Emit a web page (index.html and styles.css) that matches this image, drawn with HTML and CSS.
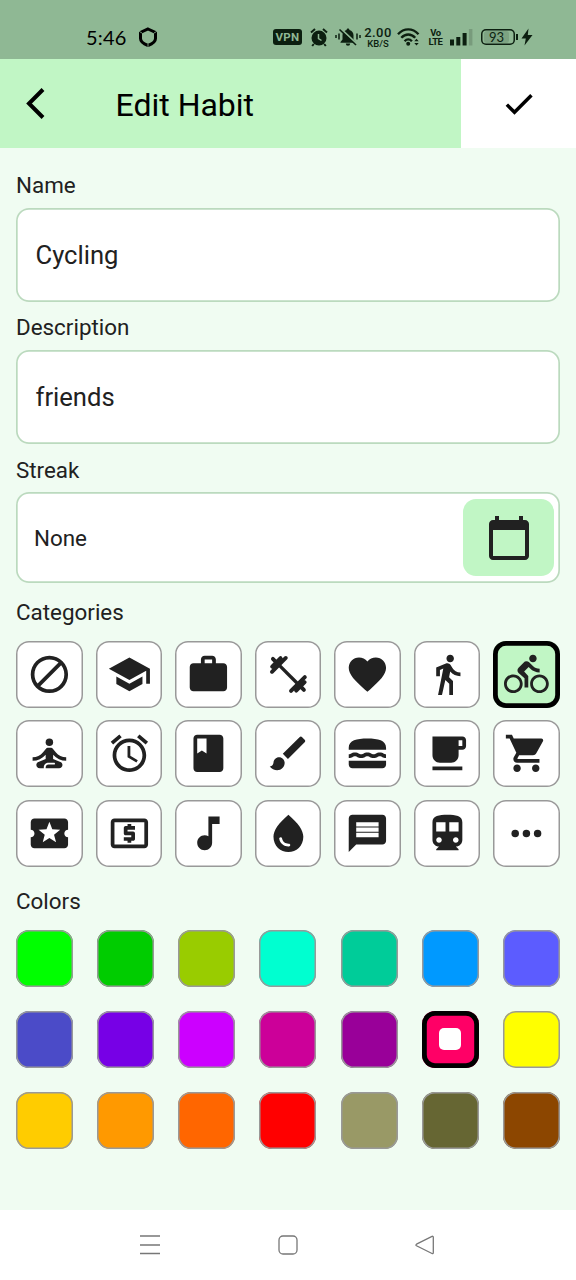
FILE: index.html
```html
<!DOCTYPE html>
<html lang="en">
<head>
<meta charset="utf-8">
<title>Edit Habit</title>
<link rel="stylesheet" href="styles.css">
</head>
<body>
<div class="screen">
  <div class="status">
    <span class="clock">5:46</span>
    <svg class="hex" width="22" height="22" viewBox="0 0 22 22"><path d="M11 3L18.500 6.500V12.500C18.500 15.500 15 18 11 19.500C7 18 3.500 15.500 3.500 12.500V6.500Z" fill="none" stroke="#000" stroke-width="3"/><path d="M11 17.500V22M1.500 5L5 7M20.500 5L17 7" stroke="#8fb894" stroke-width=".8"/></svg>
    <span class="vpn">VPN</span>
    <svg class="s-alarm" width="20" height="20" viewBox="0 0 20 20"><circle cx="10" cy="11" r="7.500" fill="#0c1f10"/><path d="M2 5.500L6 2M18 5.500L14 2M4.800 17L3.200 19M15.200 17L16.800 19" stroke="#0c1f10" stroke-width="2"/><path d="M9.500 7V11.500L12.500 13.500" fill="none" stroke="#8fb894" stroke-width="1.500"/></svg>
    <svg class="s-bell" width="26" height="20" viewBox="0 0 26 20"><path d="M13 1.500c.9 0 1.400.6 1.400 1.400 2.600.6 4.100 2.800 4.100 5.400v4.200l2 2.500v.8h-15v-.8l2-2.500V8.300c0-2.600 1.500-4.800 4.100-5.400 0-.8.5-1.400 1.400-1.400zM10.800 16.500h4.400a2.200 2.200 0 0 1-4.400 0z" fill="#0c1f10"/><path d="M6 2L22 17" stroke="#8fb894" stroke-width="1.800"/><path d="M4.500 2.500L21 18" stroke="#0c1f10" stroke-width="1.600"/><path d="M1 8v3M4 6.500v6M22 6.500v6M25 8v3" stroke="#0c1f10" stroke-width="1.500"/></svg>
    <span class="speed"><b>2.00</b><i>KB/S</i></span>
    <svg class="wifi" width="24" height="20" viewBox="0 0 24 20"><g fill="none" stroke="#0c1f10" stroke-width="2.400"><path d="M1 7.200C7 .7 15.500.7 21.500 7.200"/><path d="M4.300 10.800C8.500 6.300 14 6.300 18.200 10.800"/><path d="M7.600 14.200C9.800 11.800 12.700 11.800 14.900 14.200"/></g><circle cx="11.200" cy="16.800" r="2" fill="#0c1f10"/><path d="M17.300 14.300L19.500 11.700L21.700 14.300ZM17.300 16L19.500 18.600L21.700 16Z" fill="#0c1f10"/></svg>
    <span class="volte"><b>Vo</b><b>LTE</b></span>
    <svg class="signal" width="23" height="17" viewBox="0 0 23 17"><path d="M0 10.500h4V16.500H0zM6.300 8h4V16.500h-4zM12.600 4h4V16.500h-4z" fill="#0c1f10"/><path d="M18.900 0h3.500v16.500h-3.500z" fill="#789b7c"/></svg>
    <span class="battery"><span class="charge">93</span></span>
    <svg class="bolt" width="12" height="18" viewBox="0 0 12 18"><path d="M7.500 0.500L.5 10.500H4.800L3.500 17.500L11.500 7H6.800Z" fill="#0c1f10"/></svg>
  </div>

  <div class="header">
    <svg class="back" width="24" height="36" viewBox="0 0 24 36"><path d="M19 3.500L5 17.500L19 31.500" fill="none" stroke="#000" stroke-width="4"/></svg>
    <h1 class="title">Edit Habit</h1>
    <div class="save"><svg width="36" height="36" viewBox="0 0 24 24"><path d="M3.900 12.400L9 17.500L20.300 6.200" fill="none" stroke="#000" stroke-width="2.300"/></svg></div>
  </div>

  <div class="form">
    <div class="label">Name</div>
    <div class="input">Cycling</div>
    <div class="label">Description</div>
    <div class="input">friends</div>
    <div class="label">Streak</div>
    <div class="input streak">None
      <span class="date"><svg width="48" height="48" viewBox="0 0 24 24"><path d="M20 3h-1V1h-2v2H7V1H5v2H4c-1.100 0-2 .9-2 2v16c0 1.100.9 2 2 2h16c1.100 0 2-.9 2-2V5c0-1.100-.9-2-2-2zm0 18H4V8h16v13z"/></svg></span>
    </div>
    <div class="label cat-label">Categories</div>
    <div class="cats">
      <div class="cat"><svg viewBox="0 0 24 24"><path d="M12 2C6.480 2 2 6.480 2 12s4.480 10 10 10 10-4.480 10-10S17.520 2 12 2zM4 12c0-4.420 3.580-8 8-8 1.850 0 3.550.63 4.900 1.690L5.690 16.900C4.630 15.550 4 13.850 4 12zm8 8c-1.850 0-3.550-.63-4.900-1.690L18.310 7.100C19.370 8.450 20 10.150 20 12c0 4.420-3.580 8-8 8z"/></svg></div>
      <div class="cat"><svg viewBox="0 0 24 24"><path d="M5 13.180v4L12 21l7-3.820v-4L12 17l-7-3.820zM12 3L1 9l11 6 9-4.910V17h2V9L12 3z"/></svg></div>
      <div class="cat"><svg viewBox="0 0 24 24"><path d="M20 6h-4V4c0-1.110-.89-2-2-2h-4c-1.110 0-2 .89-2 2v2H4c-1.110 0-1.990.89-1.990 2L2 19c0 1.110.89 2 2 2h16c1.110 0 2-.89 2-2V8c0-1.110-.89-2-2-2zm-6 0h-4V4h4v2z"/></svg></div>
      <div class="cat"><svg viewBox="0 0 24 24"><path d="M5 5L19 19" fill="none" stroke="#212121" stroke-width="1.800"/><path d="M3.200 10.600L10.600 3.200M3.300 7.800L7.800 3.300M3.700 3.700L5 5M13.400 20.800L20.800 13.400M16.200 20.700L20.700 16.200M19 19L20.300 20.300" fill="none" stroke="#212121" stroke-width="2.100" stroke-linecap="round"/></svg></div>
      <div class="cat"><svg viewBox="0 0 24 24"><path d="M12 21.350l-1.450-1.320C5.400 15.360 2 12.280 2 8.500 2 5.420 4.420 3 7.500 3c1.740 0 3.410.81 4.500 2.090C13.090 3.810 14.760 3 16.500 3 19.580 3 22 5.420 22 8.500c0 3.780-3.400 6.860-8.550 11.540L12 21.350z"/></svg></div>
      <div class="cat"><svg viewBox="0 0 24 24"><path d="M13.500 5.500c1.100 0 2-.9 2-2s-.9-2-2-2-2 .9-2 2 .9 2 2 2zM9.800 8.900L7 23h2.100l1.800-8 2.100 2v6h2v-7.500l-2.100-2 .6-3C14.800 12 16.800 13 19 13v-2c-1.900 0-3.500-1-4.300-2.400l-1-1.600c-.4-.6-1-1-1.700-1-.3 0-.5.1-.8.1L6 8.300V13h2V9.600l1.800-.7"/></svg></div>
      <div class="cat on"><svg viewBox="0 0 24 24"><path d="M15.500 5.500c1.100 0 2-.9 2-2s-.9-2-2-2-2 .9-2 2 .9 2 2 2zM5 12c-2.800 0-5 2.200-5 5s2.200 5 5 5 5-2.200 5-5-2.200-5-5-5zm0 8.500c-1.900 0-3.500-1.600-3.500-3.500s1.600-3.500 3.500-3.500 3.500 1.600 3.500 3.500-1.600 3.500-3.500 3.500zm5.800-10l2.400-2.400.8.8c1.300 1.300 3 2.100 5.100 2.100V9c-1.500 0-2.700-.6-3.600-1.500l-1.900-1.900c-.5-.4-1-.6-1.600-.6s-1.100.2-1.400.6L7.800 8.400c-.4.4-.6.9-.6 1.400 0 .6.2 1.100.6 1.400L11 14v5h2v-6.200l-2.200-2.300zM19 12c-2.800 0-5 2.200-5 5s2.200 5 5 5 5-2.200 5-5-2.200-5-5-5zm0 8.500c-1.900 0-3.500-1.600-3.500-3.500s1.600-3.500 3.500-3.500 3.500 1.600 3.500 3.500-1.600 3.500-3.500 3.500z"/></svg></div>
      <div class="cat"><svg viewBox="0 0 24 24"><circle cx="12" cy="6" r="2"/><path d="M21 16v-2c-2.240 0-4.160-.96-5.600-2.680l-1.340-1.600C13.680 9.260 13.120 9 12.530 9h-1.050c-.59 0-1.150.26-1.530.72l-1.340 1.600C7.160 13.040 5.240 14 3 14v2c2.770 0 5.190-1.170 7-3.250V15l-3.880 1.550C5.450 16.820 5 17.480 5 18.210 5 19.200 5.800 20 6.790 20H9v-.5c0-1.380 1.120-2.500 2.500-2.500h3c.28 0 .5.22.5.5s-.22.5-.5.5h-3c-.83 0-1.500.67-1.500 1.500v.5h7.210c.99 0 1.790-.8 1.790-1.790 0-.73-.45-1.390-1.120-1.660L14 15v-2.250c1.810 2.080 4.230 3.250 7 3.250z"/></svg></div>
      <div class="cat"><svg viewBox="0 0 24 24"><path d="M22 5.720l-4.600-3.860-1.290 1.530 4.600 3.860L22 5.720zM7.880 3.390L6.600 1.860 2 5.710l1.290 1.530 4.590-3.850zM12.500 8H11v6l4.750 2.850.75-1.230-4-2.370V8zM12 4c-4.970 0-9 4.030-9 9s4.020 9 9 9c4.970 0 9-4.030 9-9s-4.030-9-9-9zm0 16c-3.870 0-7-3.130-7-7s3.130-7 7-7 7 3.130 7 7-3.130 7-7 7z"/></svg></div>
      <div class="cat"><svg viewBox="0 0 24 24"><path d="M18 2H6c-1.100 0-2 .9-2 2v16c0 1.100.9 2 2 2h12c1.100 0 2-.9 2-2V4c0-1.100-.9-2-2-2zM6 4h5v8l-2.500-1.500L6 12V4z"/></svg></div>
      <div class="cat"><svg viewBox="0 0 24 24"><path d="M7 14c-1.660 0-3 1.340-3 3 0 1.310-1.160 2-2 2 .92 1.220 2.490 2 4 2 2.210 0 4-1.790 4-4 0-1.660-1.340-3-3-3zm13.710-9.370l-1.340-1.340c-.39-.39-1.020-.39-1.410 0L9 12.250 11.750 15l8.960-8.960c.39-.39.39-1.020 0-1.410z"/></svg></div>
      <div class="cat"><svg viewBox="0 0 24 24"><path d="M2 16h20v2c0 1.100-.9 2-2 2H4c-1.100 0-2-.9-2-2v-2zM18.660 11.500c-1.950 0-2.090 1-3.330 1-1.190 0-1.420-1-3.330-1-1.950 0-2.090 1-3.330 1-1.190 0-1.420-1-3.330-1-1.950 0-2.090 1-3.330 1v2c1.900 0 2.170-1 3.350-1 1.190 0 1.370 1 3.310 1 1.950 0 2.090-1 3.330-1 1.190 0 1.420 1 3.330 1 1.950 0 2.090-1 3.330-1 1.190 0 1.400.98 3.320 1l-.01-1.980c-1.170-.02-1.410-1.020-3.310-1.020zM22 9c.02-4-4.280-5-10-5S2 5 2 9v1h20V9z"/></svg></div>
      <div class="cat"><svg viewBox="0 0 24 24"><path d="M20 3H4v10c0 2.210 1.790 4 4 4h6c2.210 0 4-1.790 4-4v-3h2c1.110 0 2-.89 2-2V5c0-1.110-.89-2-2-2zm0 5h-2V5h2v3zM4 19h16v2H4z"/></svg></div>
      <div class="cat"><svg viewBox="0 0 24 24"><path d="M7 18c-1.100 0-1.990.9-1.990 2S5.900 22 7 22s2-.9 2-2-.9-2-2-2zM1 2v2h2l3.600 7.590-1.350 2.450c-.16.28-.25.61-.25.96 0 1.100.9 2 2 2h12v-2H7.420c-.14 0-.25-.11-.25-.25l.03-.12.9-1.630h7.450c.75 0 1.410-.41 1.750-1.030l3.580-6.490c.08-.14.12-.31.12-.48 0-.55-.45-1-1-1H5.210l-.94-2H1zm16 16c-1.100 0-1.990.9-1.990 2s.89 2 1.990 2 2-.9 2-2-.9-2-2-2z"/></svg></div>
      <div class="cat"><svg viewBox="0 0 24 24"><path d="M20 12c0-1.100.9-2 2-2V6c0-1.100-.9-2-2-2H4c-1.100 0-1.990.9-1.990 2v4c1.100 0 1.990.9 1.990 2s-.89 2-2 2v4c0 1.100.9 2 2 2h16c1.100 0 2-.9 2-2v-4c-1.100 0-2-.9-2-2zm-4.420 4.800L12 14.500l-3.580 2.300 1.080-4.120-3.290-2.690 4.240-.25L12 5.800l1.540 3.950 4.240.25-3.290 2.690 1.090 4.110z"/></svg></div>
      <div class="cat"><svg viewBox="0 0 24 24"><path d="M11 17h2v-1h1c.55 0 1-.45 1-1v-3c0-.55-.45-1-1-1h-3v-1h4V8h-2V7h-2v1h-1c-.55 0-1 .45-1 1v3c0 .55.45 1 1 1h3v1H9v2h2v1zm9-13H4c-1.110 0-1.990.89-1.990 2L2 18c0 1.110.89 2 2 2h16c1.110 0 2-.89 2-2V6c0-1.110-.89-2-2-2zm0 14H4V6h16v12z"/></svg></div>
      <div class="cat"><svg viewBox="0 0 24 24"><path d="M12 3v10.550c-.59-.34-1.270-.55-2-.55-2.210 0-4 1.790-4 4s1.790 4 4 4 4-1.790 4-4V7h4V3h-6z"/></svg></div>
      <div class="cat"><svg viewBox="0 0 24 24"><path d="M12 2c-5.330 4.550-8 8.480-8 11.800 0 4.980 3.800 8.200 8 8.200s8-3.220 8-8.200C20 10.480 17.330 6.550 12 2zM7.830 14c.37 0 .67.26.74.62.41 2.220 2.280 2.980 3.640 2.870.43-.02.79.32.79.75 0 .4-.32.73-.72.75-2.130.13-4.620-1.090-5.190-4.120C7.010 14.420 7.370 14 7.830 14z"/></svg></div>
      <div class="cat"><svg viewBox="0 0 24 24"><path d="M20 2H4c-1.100 0-1.990.9-1.990 2L2 22l4-4h14c1.100 0 2-.9 2-2V4c0-1.100-.9-2-2-2zm-2 12H6v-2.300h12V14zm0-2.850H6v-2.300h12v2.300zm0-2.850H6V6h12v2.300z"/></svg></div>
      <div class="cat"><svg viewBox="0 0 24 24"><path d="M12 2c-4.420 0-8 .5-8 4v9.500C4 17.430 5.570 19 7.500 19L6 20.500v.5h12v-.5L16.500 19c1.930 0 3.500-1.570 3.500-3.500V6c0-3.500-3.580-4-8-4zM7.500 17c-.83 0-1.500-.67-1.500-1.500S6.670 14 7.500 14s1.500.67 1.500 1.500S8.330 17 7.500 17zm3.500-6H6V6h5v5zm5.500 6c-.83 0-1.500-.67-1.500-1.500s.67-1.500 1.500-1.500 1.500.67 1.500 1.500-.67 1.500-1.500 1.500zm1.500-6h-5V6h5v5z"/></svg></div>
      <div class="cat"><svg viewBox="0 0 24 24"><circle cx="6" cy="12" r="2"/><circle cx="12" cy="12" r="2"/><circle cx="18" cy="12" r="2"/></svg></div>
    </div>
    <div class="label color-label">Colors</div>
    <div class="colors">
      <i class="c" style="background:#0f0"></i><i class="c" style="background:#0c0"></i><i class="c" style="background:#9c0"></i><i class="c" style="background:#00ffd0"></i><i class="c" style="background:#00cc99"></i><i class="c" style="background:#09f"></i><i class="c" style="background:#5c5cff"></i>
      <i class="c" style="background:#4b4bc8"></i><i class="c" style="background:#7700e6"></i><i class="c" style="background:#c0f"></i><i class="c" style="background:#cc0099"></i><i class="c" style="background:#909"></i><i class="c picked" style="background:#ff0066"><b class="dot"></b></i><i class="c" style="background:#ff0"></i>
      <i class="c" style="background:#fc0"></i><i class="c" style="background:#f90"></i><i class="c" style="background:#f60"></i><i class="c" style="background:#f00"></i><i class="c" style="background:#996"></i><i class="c" style="background:#663"></i><i class="c" style="background:#8c4600"></i>
    </div>
  </div>

  <div class="nav">
    <svg width="22" height="22" viewBox="0 0 22 22"><path d="M1 2h20M1 11h20M1 19.500h20"/></svg>
    <svg width="22" height="22" viewBox="0 0 22 22"><rect x="2" y="2" width="18" height="18" rx="4"/></svg>
    <svg width="22" height="22" viewBox="0 0 22 22"><path d="M2.500 10.200L18 2.300Q19.300 2 19.300 3.300V18.500Q19.300 20 18 19.500L2.500 11.800Q1.300 11 2.500 10.200Z"/></svg>
  </div>
</div>
</body>
</html>
```
FILE: styles.css
```css
* { box-sizing: border-box; }
body { margin: 0; font-family: Roboto, sans-serif; color: #212121; }
svg { flex: none; fill: #212121; }
.screen { width: 576px; height: 1280px; display: flex; flex-direction: column; background: #f0fcf2; overflow: hidden; }

.status { flex: none; height: 59px; background: #8fb894; display: flex; align-items: center; padding: 15px 0 0 86px; color: #0c1f10; }
.clock { font-family: Lato, sans-serif; font-size: 20px; line-height: 24px; width: 51px; letter-spacing: .2px; color: #000; }
.vpn { margin-left: 114px; width: 29px; height: 16px; border-radius: 3px; background: #0c1f10; color: #8fb894; font: bold 11.500px/16px Roboto, sans-serif; text-align: center; letter-spacing: .3px; }
.s-alarm { margin-left: 7px; }
.s-bell { margin-left: 6px; }
.speed { margin-left: 3px; width: 28px; display: flex; flex-direction: column; align-items: center; }
.speed b { font: 500 13px/13px Roboto, sans-serif; letter-spacing: .4px; }
.speed i { font: 500 9.500px/9px Roboto, sans-serif; }
.wifi { margin-left: 5px; }
.volte { margin-left: 8px; width: 13px; display: flex; flex-direction: column; align-items: center; }
.volte b { font: bold 9.500px/9px Roboto, sans-serif; letter-spacing: -.5px; }
.signal { margin-left: 8px; }
.battery { margin-left: 8px; width: 34px; height: 16px; box-shadow: inset 0 0 0 1.500px #0c1f10; border-radius: 5px; padding: 2px 3px; position: relative; }
.battery::after { content: ""; position: absolute; right: -3px; top: 5px; width: 2px; height: 6px; background: #0c1f10; }
.charge { display: block; height: 12px; width: 25px; border-radius: 3px; background: #7da382; font: 13px/12px Lato, sans-serif; text-align: center; }
.bolt { margin-left: 6px; }

.header { flex: none; height: 89px; background: #c1f6c5; display: flex; align-items: center; padding-left: 24px; }
.title { margin: 2px 0 0 67.500px; font-size: 32px; line-height: 40px; font-weight: 400; color: #000; }
.save { margin-left: auto; width: 115px; height: 89px; background: #fff; display: flex; align-items: center; justify-content: center; }

.form { flex: 1; padding: 24px 16px 0; }
.label { font-size: 22.400px; line-height: 27px; height: 27px; margin-bottom: 8.500px; }
.input { height: 94px; margin-bottom: 12.900px; padding: 0 19.500px; box-shadow: inset 0 0 0 1.700px #bbdabe; border-radius: 13px; background: #fff; font-size: 25.600px; display: flex; align-items: center; }
.streak { height: 91px; padding: 0 6px 0 18px; font-size: 22.400px; justify-content: space-between; margin-bottom: 15.500px; }
.date { width: 91px; height: 77px; border-radius: 13px; background: #c1f6c5; display: flex; align-items: center; justify-content: center; }
.cats { display: grid; grid-template-columns: repeat(7, 66.800px); grid-auto-rows: 66.800px; justify-content: space-between; row-gap: 12.700px; margin-top: 15px; }
.cat { box-shadow: inset 0 0 0 1.500px #999; border-radius: 13px; background: #fff; display: flex; align-items: center; justify-content: center; }
.cat svg { width: 44.800px; height: 44.800px; }
.cat.on { box-shadow: inset 0 0 0 4.800px #000; background: #c1f6c5; }
.color-label { margin-top: 21px; }
.colors { display: grid; grid-template-columns: repeat(7, 57px); grid-auto-rows: 57px; justify-content: space-between; row-gap: 24px; margin-top: 15px; }
.c { display: flex; align-items: center; justify-content: center; box-shadow: inset 0 0 0 1.500px #999; border-radius: 13px; }
.picked { box-shadow: inset 0 0 0 4.800px #000; }
.dot { width: 22px; height: 22px; border-radius: 5px; background: #fff; }

.nav { flex: none; height: 70px; background: #fff; display: flex; align-items: center; justify-content: space-between; padding: 0 140px 0 139px; }
.nav svg { fill: none; stroke: #777; stroke-width: 1.300; }
```
